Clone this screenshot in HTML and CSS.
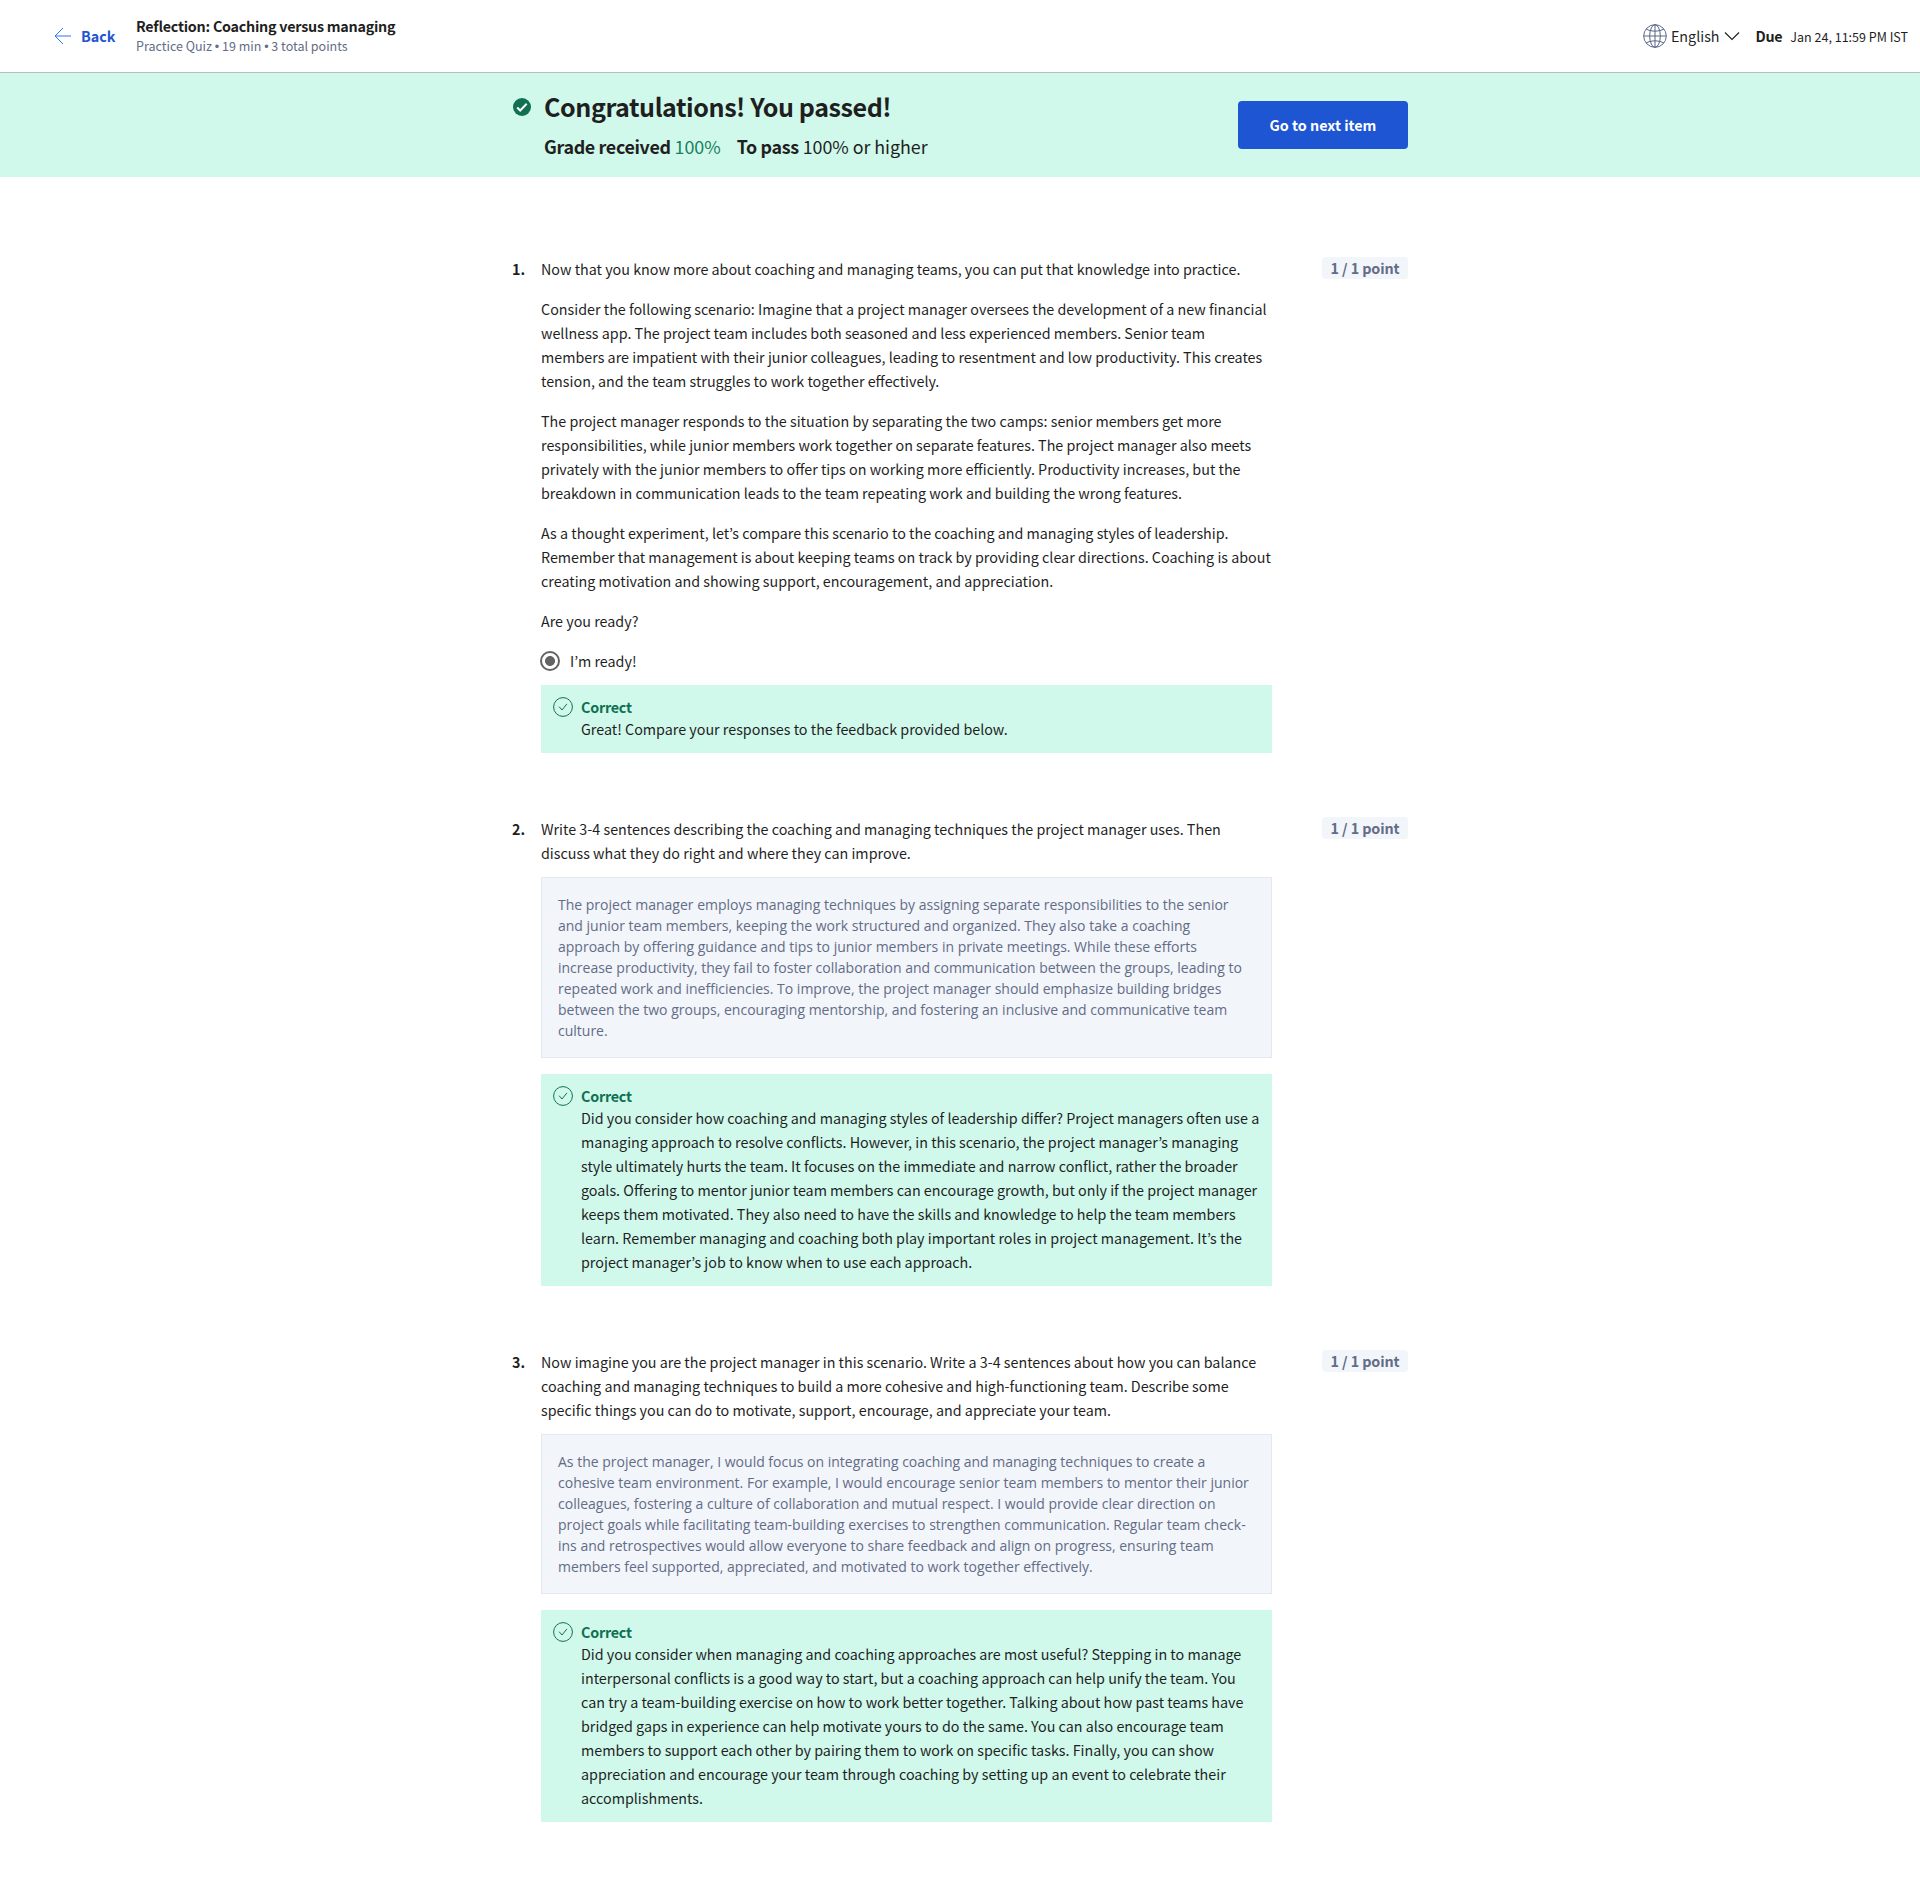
FILE: index.html
```html
<!DOCTYPE html>
<html lang="en">
<head>
<meta charset="utf-8">
<title>Reflection: Coaching versus managing</title>
<link rel="stylesheet" href="styles.css">
</head>
<body>
<svg class="sprite" aria-hidden="true">
  <symbol id="check-outline" viewBox="0 0 20 20">
    <circle cx="10" cy="10" r="9.4"/>
    <path d="M6.1 9.7l2.9 3.3 4.9-6.1"/>
  </symbol>
</svg>
<header class="topbar">
  <a class="back" href="#">
    <svg class="back-icon" width="18" height="18" viewBox="0 0 18 18"><path d="M9 1L1 9l8 8M1 9h16"/></svg>
    <span>Back</span>
  </a>
  <div class="item-info">
    <h1 class="item-title">Reflection: Coaching versus managing</h1>
    <p class="item-meta">Practice Quiz <span class="dot">•</span> 19 min <span class="dot">•</span> 3 total points</p>
  </div>
  <div class="topbar-right">
    <button class="language">
      <svg class="globe" width="24" height="24" viewBox="0 0 24 24"><circle cx="12" cy="12" r="11.3"/><ellipse cx="12" cy="12" rx="5.3" ry="11.3"/><path d="M12 .7v22.6M.7 12h22.6M3.2 5.2Q7 7.2 12 7.2t8.8-2M3.2 18.8q3.800-2 8.800-2t8.800 2"/></svg>
      <span class="language-name">English</span>
      <svg class="chevron" width="16" height="10" viewBox="0 0 16 10"><path d="M1 1.500l7 7 7-7"/></svg>
    </button>
    <strong class="due">Due</strong>
    <span class="due-date">Jan 24, 11:59 PM IST</span>
  </div>
</header>
<section class="banner">
  <div class="banner-inner">
    <svg class="passed-icon" width="18" height="18" viewBox="0 0 18 18"><circle cx="9" cy="9" r="9"/><path d="M4.200 9.500l3 3 6.500-6.700"/></svg>
    <div class="result">
      <h2 class="result-title">Congratulations! You passed!</h2>
      <p class="result-grade"><span class="grade"><b>Grade received</b> <span class="score">100%</span></span><span><b>To pass</b> 100% or higher</span></p>
    </div>
    <button class="next">Go to next item</button>
  </div>
</section>
<main class="quiz">
  <section class="question">
    <div class="number">1.</div>
    <div class="body">
      <p>Now that you know more about coaching and managing teams, you can put that knowledge into practice.</p>
      <p>Consider the following scenario: Imagine that a project manager oversees the development of a new financial<br>wellness app. The project team includes both seasoned and less experienced members. Senior team<br>members are impatient with their junior colleagues, leading to resentment and low productivity. This creates<br>tension, and the team struggles to work together effectively.</p>
      <p>The project manager responds to the situation by separating the two camps: senior members get more<br>responsibilities, while junior members work together on separate features. The project manager also meets<br>privately with the junior members to offer tips on working more efficiently. Productivity increases, but the<br>breakdown in communication leads to the team repeating work and building the wrong features.</p>
      <p>As a thought experiment, let’s compare this scenario to the coaching and managing styles of leadership.<br>Remember that management is about keeping teams on track by providing clear directions. Coaching is about<br>creating motivation and showing support, encouragement, and appreciation.</p>
      <p>Are you ready?</p>
      <div class="option"><span class="radio"></span><span>I’m ready!</span></div>
      <div class="feedback">
        <svg class="check" width="20" height="20"><use href="#check-outline"/></svg>
        <div>
          <div class="verdict">Correct</div>
          <p>Great! Compare your responses to the feedback provided below.</p>
        </div>
      </div>
    </div>
    <div class="points">1 / 1 point</div>
  </section>
  <section class="question">
    <div class="number">2.</div>
    <div class="body">
      <p>Write 3-4 sentences describing the coaching and managing techniques the project manager uses. Then<br>discuss what they do right and where they can improve.</p>
      <div class="answer">The project manager employs managing techniques by assigning separate responsibilities to the senior<br>and junior team members, keeping the work structured and organized. They also take a coaching<br>approach by offering guidance and tips to junior members in private meetings. While these efforts<br>increase productivity, they fail to foster collaboration and communication between the groups, leading to<br>repeated work and inefficiencies. To improve, the project manager should emphasize building bridges<br>between the two groups, encouraging mentorship, and fostering an inclusive and communicative team<br>culture.</div>
      <div class="feedback">
        <svg class="check" width="20" height="20"><use href="#check-outline"/></svg>
        <div>
          <div class="verdict">Correct</div>
          <p>Did you consider how coaching and managing styles of leadership differ? Project managers often use a<br>managing approach to resolve conflicts. However, in this scenario, the project manager’s managing<br>style ultimately hurts the team. It focuses on the immediate and narrow conflict, rather the broader<br>goals. Offering to mentor junior team members can encourage growth, but only if the project manager<br>keeps them motivated. They also need to have the skills and knowledge to help the team members<br>learn. Remember managing and coaching both play important roles in project management. It’s the<br>project manager’s job to know when to use each approach.</p>
        </div>
      </div>
    </div>
    <div class="points">1 / 1 point</div>
  </section>
  <section class="question">
    <div class="number">3.</div>
    <div class="body">
      <p>Now imagine you are the project manager in this scenario. Write a 3-4 sentences about how you can balance<br>coaching and managing techniques to build a more cohesive and high-functioning team. Describe some<br>specific things you can do to motivate, support, encourage, and appreciate your team.</p>
      <div class="answer">As the project manager, I would focus on integrating coaching and managing techniques to create a<br>cohesive team environment. For example, I would encourage senior team members to mentor their junior<br>colleagues, fostering a culture of collaboration and mutual respect. I would provide clear direction on<br>project goals while facilitating team-building exercises to strengthen communication. Regular team check-<br>ins and retrospectives would allow everyone to share feedback and align on progress, ensuring team<br>members feel supported, appreciated, and motivated to work together effectively.</div>
      <div class="feedback">
        <svg class="check" width="20" height="20"><use href="#check-outline"/></svg>
        <div>
          <div class="verdict">Correct</div>
          <p>Did you consider when managing and coaching approaches are most useful? Stepping in to manage<br>interpersonal conflicts is a good way to start, but a coaching approach can help unify the team. You<br>can try a team-building exercise on how to work better together. Talking about how past teams have<br>bridged gaps in experience can help motivate yours to do the same. You can also encourage team<br>members to support each other by pairing them to work on specific tasks. Finally, you can show<br>appreciation and encourage your team through coaching by setting up an event to celebrate their<br>accomplishments.</p>
        </div>
      </div>
    </div>
    <div class="points">1 / 1 point</div>
  </section>
</main>
</body>
</html>
```
FILE: styles.css
```css
* { box-sizing: border-box; }
body {
  margin: 0;
  background: #fff;
  color: #1f1f1f;
  font-family: "Noto Sans CJK KR", "Liberation Sans", sans-serif;
  font-size: 14.32px;
  line-height: 24px;
  white-space: nowrap;
}
h1, h2, p { margin: 0; font-weight: inherit; }
button { border: 0; background: none; padding: 0; font: inherit; color: inherit; }
.sprite { display: none; }

.topbar {
  display: flex;
  align-items: center;
  height: 73px;
  padding: 0 12px 0 54px;
  border-bottom: 1px solid #bdbdbd;
}
.back {
  display: flex;
  align-items: center;
  gap: 9px;
  width: 82px;
  color: #1d55d3;
  font-weight: 700;
  text-decoration: none;
}
.back-icon { fill: none; stroke: #2a73ff; stroke-width: 1; }
.item-title { font-size: 14.32px; line-height: 20px; font-weight: 700; letter-spacing: -0.24px; }
.item-meta { font-size: 12.53px; line-height: 20px; color: #636c86; }
.dot { font-family: "Liberation Sans", sans-serif; line-height: 1; }
.topbar-right { display: flex; align-items: center; margin-left: auto; }
.language { display: flex; align-items: center; }
.globe { fill: none; stroke: #5b6787; stroke-width: 1; margin-right: 4px; }
.chevron { fill: none; stroke: #1f1f1f; stroke-width: 1.1; margin: 0 16px 0 4px; }
.due { margin-right: 8px; letter-spacing: -0.3px; }
.due-date { padding-top: 2px; font-size: 12.53px; }

.banner { background: #d0f9ec; height: 104px; }
.banner-inner {
  display: flex;
  align-items: center;
  width: 896px;
  height: 104px;
  margin: 0 auto;
}
.passed-icon { align-self: flex-start; margin: 25px 13px 0 1px; fill: #0f7052; }
.passed-icon path { fill: none; stroke: #fff; stroke-width: 2; }
.result-title { font-size: 25.07px; line-height: 36px; font-weight: 700; letter-spacing: -0.44px; }
.result-grade { display: flex; gap: 16px; margin: 7px 0 1px; font-size: 17.9px; line-height: 30px; letter-spacing: -0.06px; }
.result-grade b { letter-spacing: -0.34px; }
.score { color: #1a7f5c; }
.next {
  width: 170px;
  height: 48px;
  margin-left: auto;
  border-radius: 4px;
  background: #1d55d3;
  color: #fff;
  font-weight: 700;
}

.quiz {
  display: flex;
  flex-direction: column;
  gap: 64px;
  width: 896px;
  margin: 80px auto 0;
  padding-bottom: 60px;
}
.question { display: flex; align-items: flex-start; }
.number { width: 29px; font-weight: 700; }
.body { width: 731px; }
.body > p + p, .option { margin-top: 16px; }
.option { display: flex; align-items: center; gap: 10px; margin-left: -1px; }
.radio {
  width: 20px;
  height: 20px;
  border: 2px solid #636363;
  border-radius: 50%;
  background: radial-gradient(circle, #636363 4.600px, transparent 5.300px);
}
.answer {
  margin-top: 12px;
  padding: 16px;
  border: 1px solid #e3e8f4;
  background: #f2f5fa;
  color: #636c86;
  font: 14px/21px "Open Sans", sans-serif;
}
.feedback {
  display: flex;
  gap: 8px;
  margin-top: 12px;
  padding: 12px;
  background: #d0f9ec;
}
.answer + .feedback { margin-top: 16px; }
.check { fill: none; stroke: #0f7052; stroke-width: 1; }
.verdict { color: #0f7052; font-weight: 700; line-height: 20px; letter-spacing: -0.22px; }
.points {
  margin-left: auto;
  width: 86px;
  height: 22px;
  border-radius: 4px;
  background: #f2f5fa;
  color: #636c86;
  font-weight: 700;
  line-height: 22px;
  letter-spacing: -0.1px;
  text-align: center;
}
```
